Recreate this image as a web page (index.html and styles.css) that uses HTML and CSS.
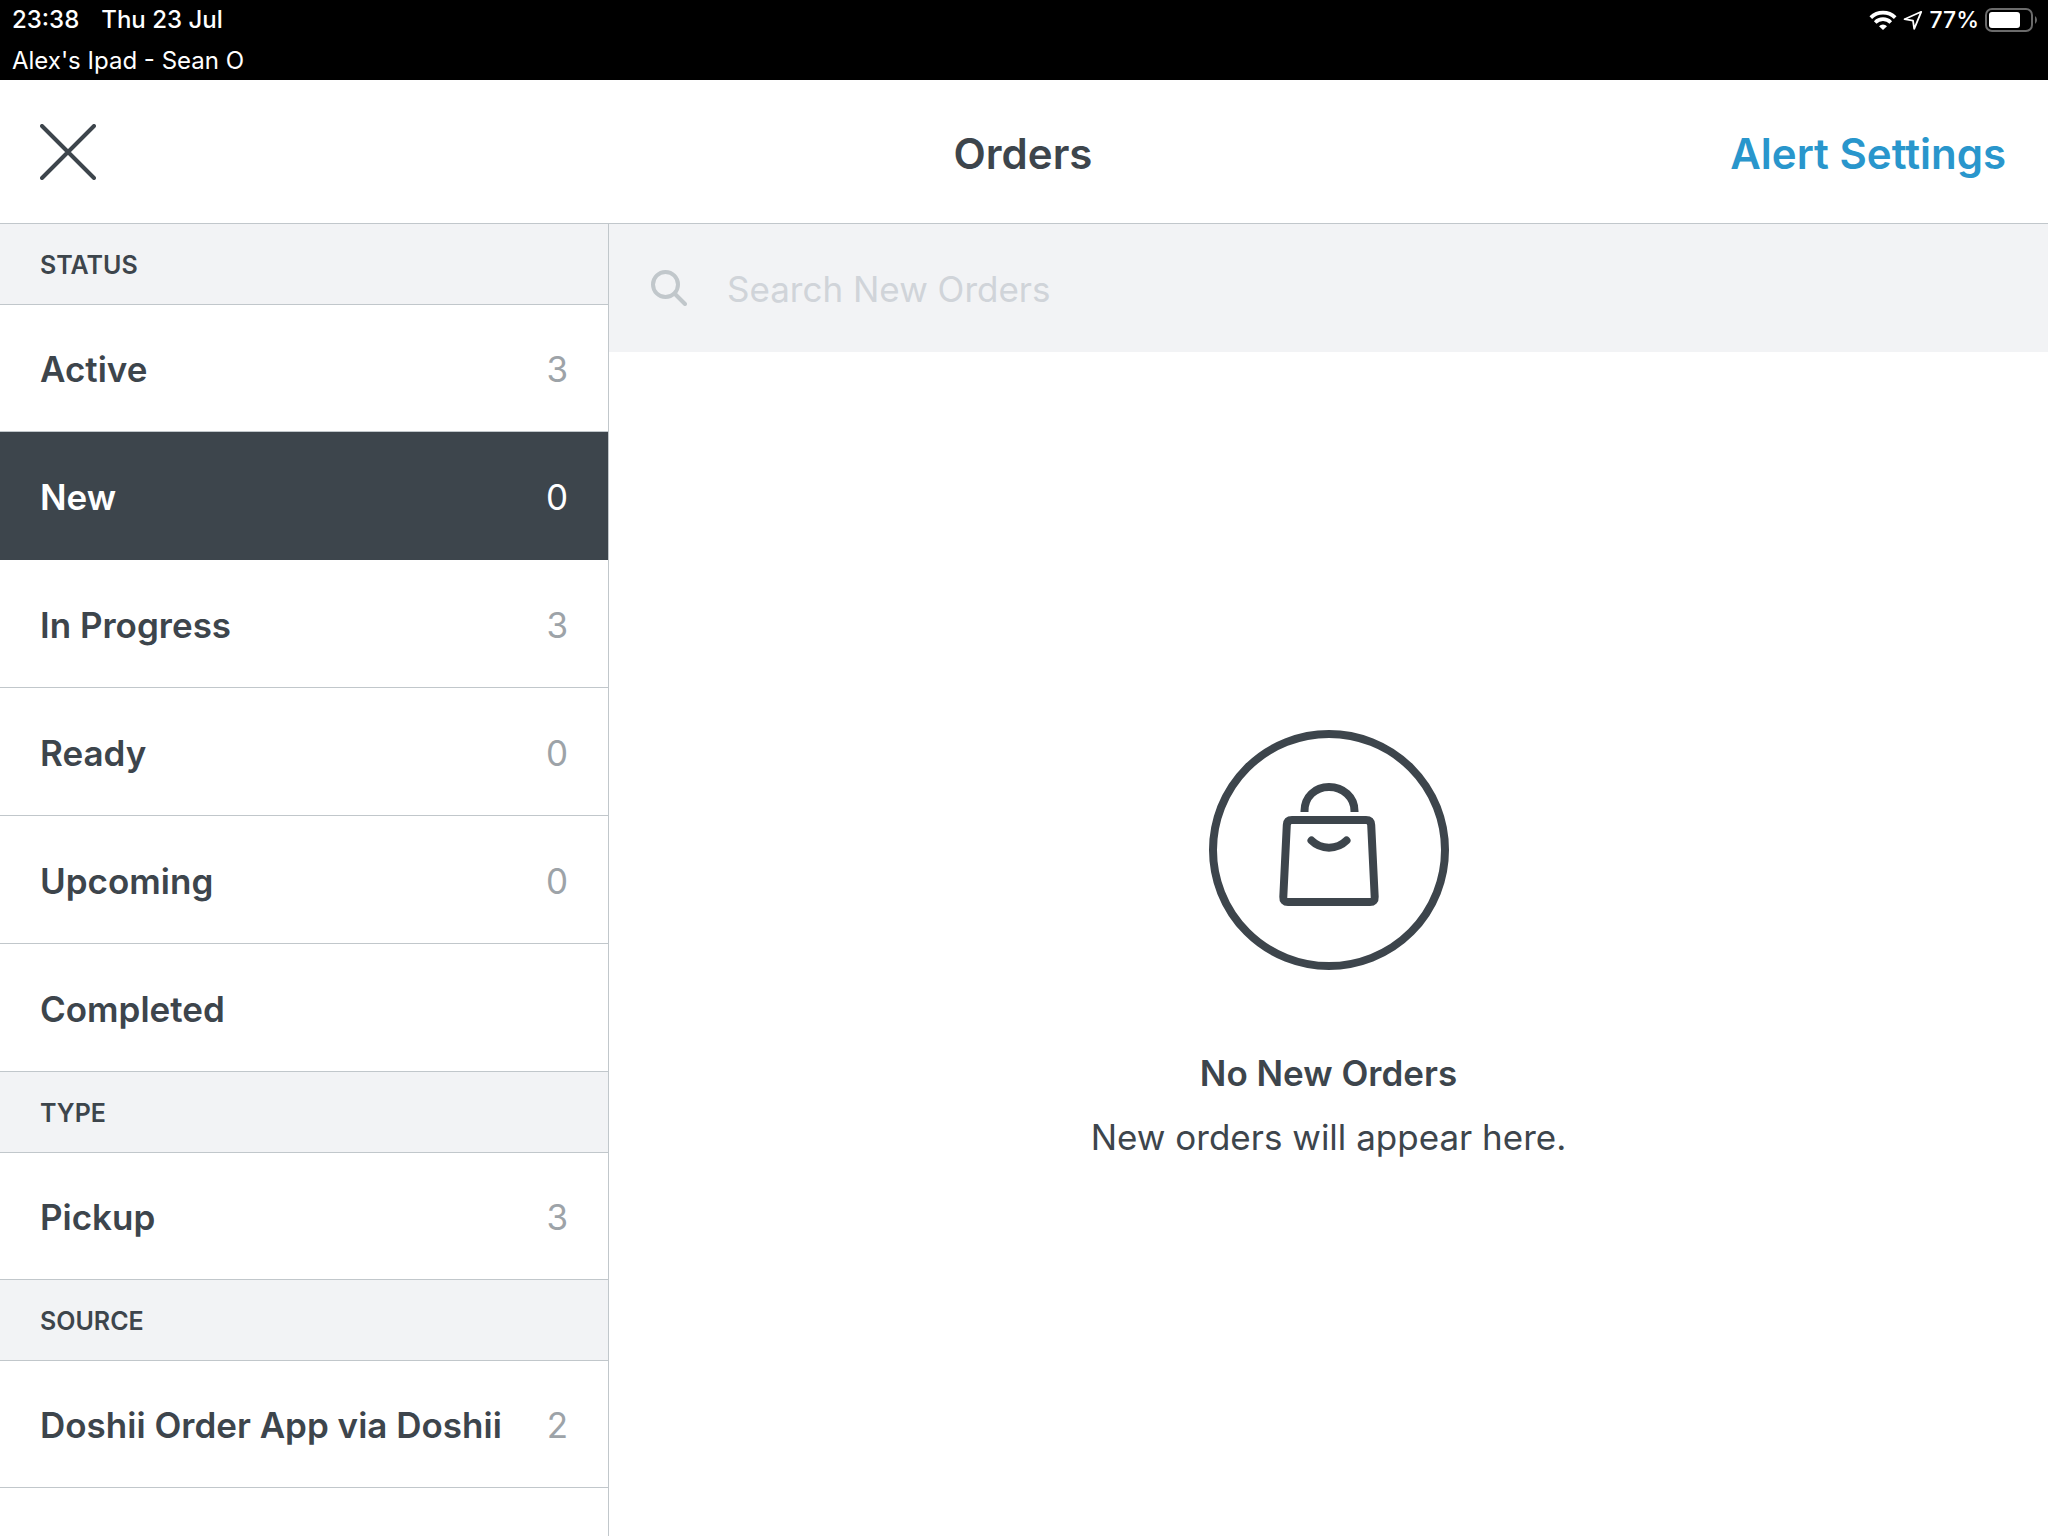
FILE: index.html
```html
<!DOCTYPE html>
<html lang="en">
<head>
<meta charset="utf-8">
<meta name="viewport" content="width=device-width, initial-scale=1">
<title>Orders</title>
<link rel="stylesheet" href="styles.css">
</head>
<body>
<div class="statusbar">
  <div class="statusbar-row">
    <div class="statusbar-group statusbar-clock"><span>23:38</span><span>Thu 23 Jul</span></div>
    <div class="statusbar-group statusbar-device">
      <svg class="wifi" viewBox="0 0 28 20" width="28" height="20" aria-hidden="true">
        <path d="M1.800 7.600 A17.500 17.500 0 0 1 26.200 7.600" fill="none" stroke="#fff" stroke-width="3.800"/>
        <path d="M6.200 12.400 A11 11 0 0 1 21.800 12.400" fill="none" stroke="#fff" stroke-width="3.600"/>
        <path d="M14 20 L10 16.200 A5.800 5.800 0 0 1 18 16.200 Z" fill="#fff"/>
      </svg>
      <svg class="location" viewBox="0 0 20 20" width="20" height="20" aria-hidden="true">
        <path d="M18.200 1.800 L1.500 9.200 L10 10.600 L11.200 18.800 Z" fill="none" stroke="#fff" stroke-width="1.800" stroke-linejoin="round"/>
      </svg>
      <span>77%</span>
      <svg class="battery" viewBox="0 0 54 24" width="54" height="24" aria-hidden="true">
        <rect x="1" y="1" width="46" height="22" rx="6" fill="none" stroke="#6b6b6b" stroke-width="2"/>
        <rect x="4" y="4" width="31" height="16" rx="3" fill="#fff"/>
        <path d="M50 8 A5 5 0 0 1 50 16 Z" fill="#6b6b6b"/>
      </svg>
    </div>
  </div>
  <div class="statusbar-carrier">Alex's Ipad - Sean O</div>
</div>

<header class="topbar">
  <button class="close" type="button" aria-label="Close">
    <svg viewBox="0 0 56 56" width="56" height="56" aria-hidden="true">
      <path d="M2 2 L54 54 M54 2 L2 54" stroke="#3d454c" stroke-width="4" stroke-linecap="round"/>
    </svg>
  </button>
  <h1 class="title">Orders</h1>
  <button class="alert-settings" type="button">Alert Settings</button>
</header>

<div class="workspace">
  <nav class="sidebar" aria-label="Order filters">
    <h2 class="group-title">STATUS</h2>
    <ul class="group">
      <li><button class="filter" type="button"><span>Active</span><span class="count">3</span></button></li>
      <li><button class="filter selected" type="button" aria-current="true"><span>New</span><span class="count">0</span></button></li>
      <li><button class="filter" type="button"><span>In Progress</span><span class="count">3</span></button></li>
      <li><button class="filter" type="button"><span>Ready</span><span class="count">0</span></button></li>
      <li><button class="filter" type="button"><span>Upcoming</span><span class="count">0</span></button></li>
      <li><button class="filter" type="button"><span>Completed</span></button></li>
    </ul>
    <h2 class="group-title">TYPE</h2>
    <ul class="group">
      <li><button class="filter" type="button"><span>Pickup</span><span class="count">3</span></button></li>
    </ul>
    <h2 class="group-title">SOURCE</h2>
    <ul class="group">
      <li><button class="filter" type="button"><span>Doshii Order App via Doshii</span><span class="count">2</span></button></li>
    </ul>
  </nav>

  <main class="content">
    <div class="search">
      <label for="order-search" aria-label="Search New Orders">
        <svg viewBox="0 0 36 36" width="36" height="36" aria-hidden="true">
          <circle cx="14.500" cy="14.500" r="12.500" fill="none" stroke="#c1c7cb" stroke-width="4"/>
          <path d="M23.500 23.500 L34 34" stroke="#c1c7cb" stroke-width="4" stroke-linecap="round"/>
        </svg>
      </label>
      <input id="order-search" type="search" placeholder="Search New Orders">
    </div>
    <section class="empty">
      <svg class="empty-icon" viewBox="0 0 240 240" width="240" height="240" aria-hidden="true">
        <g fill="none" stroke="#3d454c" stroke-width="8">
          <circle cx="120" cy="120" r="116"/>
          <path d="M95.500 82 V81 C95.500 67 106 57 120 57 C134 57 145.500 67 145.500 81 V82"/>
          <path d="M83 90 H157 Q162 90 162.200 95 L165.700 167 Q166 172 161 172 H79 Q74 172 74.300 167 L77.800 95 Q78 90 83 90 Z"/>
          <path d="M102.500 110.500 C112 120 128 120 137.500 110.500" stroke-linecap="round"/>
        </g>
      </svg>
      <h2 class="empty-title">No New Orders</h2>
      <p class="empty-text">New orders will appear here.</p>
    </section>
  </main>
</div>
</body>
</html>
```

FILE: styles.css
```css
:root {
  --ink: #3d454c;
  --line: #c1c7cb;
  --wash: #f2f3f5;
  --muted: #9da3a8;
  --link: #2996cc;
}

* {
  box-sizing: border-box;
}

body {
  margin: 0;
  min-height: 100vh;
  display: flex;
  flex-direction: column;
  background: #fff;
  color: var(--ink);
  font-family: Inter, "Liberation Sans", sans-serif;
  font-size: 35px;
  line-height: 42px;
}

h1, h2, p, ul {
  margin: 0;
  padding: 0;
}

button, input {
  border: 0;
  padding: 0;
  background: none;
  color: inherit;
  font: inherit;
}

svg {
  display: block;
}

/* Device status bar */
.statusbar {
  background: #000;
  color: #fff;
  font-size: 24px;
  line-height: 40px;
  padding: 0 9px 0 12px;
}

.statusbar-row {
  display: flex;
  justify-content: space-between;
  font-weight: 500;
}

.statusbar-group {
  display: flex;
  align-items: center;
}

.statusbar-clock {
  gap: 22px;
}

.statusbar-device {
  gap: 6px;
}

.statusbar-device span {
  font-size: 23px;
}

.statusbar-carrier {
  height: 40px;
  line-height: 42px;
}

/* Title bar */
.topbar {
  display: grid;
  grid-template-columns: 1fr auto 1fr;
  align-items: center;
  height: 144px;
  padding: 0 42px 0 40px;
  border-bottom: 1px solid var(--line);
  font-size: 42px;
  font-weight: 600;
}

.close {
  justify-self: start;
}

.title {
  padding-top: 4px;
  font-size: 42px;
  font-weight: 600;
}

.alert-settings {
  justify-self: end;
  padding-top: 4px;
  color: var(--link);
}

.workspace {
  flex: 1;
  display: grid;
  grid-template-columns: 609px 1fr;
}

/* Filters */
.sidebar {
  border-right: 1px solid var(--line);
}

.group {
  list-style: none;
}

.group-title {
  height: 81px;
  padding-left: 40px;
  background: var(--wash);
  border-bottom: 1px solid var(--line);
  font-size: 25px;
  font-weight: 600;
  line-height: 82px;
}

.filter {
  display: flex;
  align-items: center;
  justify-content: space-between;
  width: 100%;
  height: 128px;
  padding: 2px 40px 0;
  border-bottom: 1px solid var(--line);
  font-weight: 600;
  text-align: left;
}

.group li:first-child .filter {
  height: 127px;
}

.filter.selected {
  background: var(--ink);
  border-color: var(--ink);
  color: #fff;
}

.count {
  color: var(--muted);
  font-weight: 400;
}

.selected .count {
  color: #fff;
}

/* Orders pane */
.content {
  display: flex;
  flex-direction: column;
}

.search {
  display: flex;
  align-items: center;
  gap: 40px;
  height: 128px;
  padding: 0 42px;
  background: var(--wash);
}

.search input {
  flex: 1;
  padding-top: 2px;
  outline: 0;
  appearance: none;
}

.search input::placeholder {
  color: #d0d4d9;
  opacity: 1;
}

.empty {
  flex: 1;
  display: flex;
  flex-direction: column;
  align-items: center;
  justify-content: center;
  text-align: center;
}

.empty-title {
  margin-top: 82px;
  font-size: 35px;
  font-weight: 600;
}

.empty-text {
  margin-top: 22px;
}
```
